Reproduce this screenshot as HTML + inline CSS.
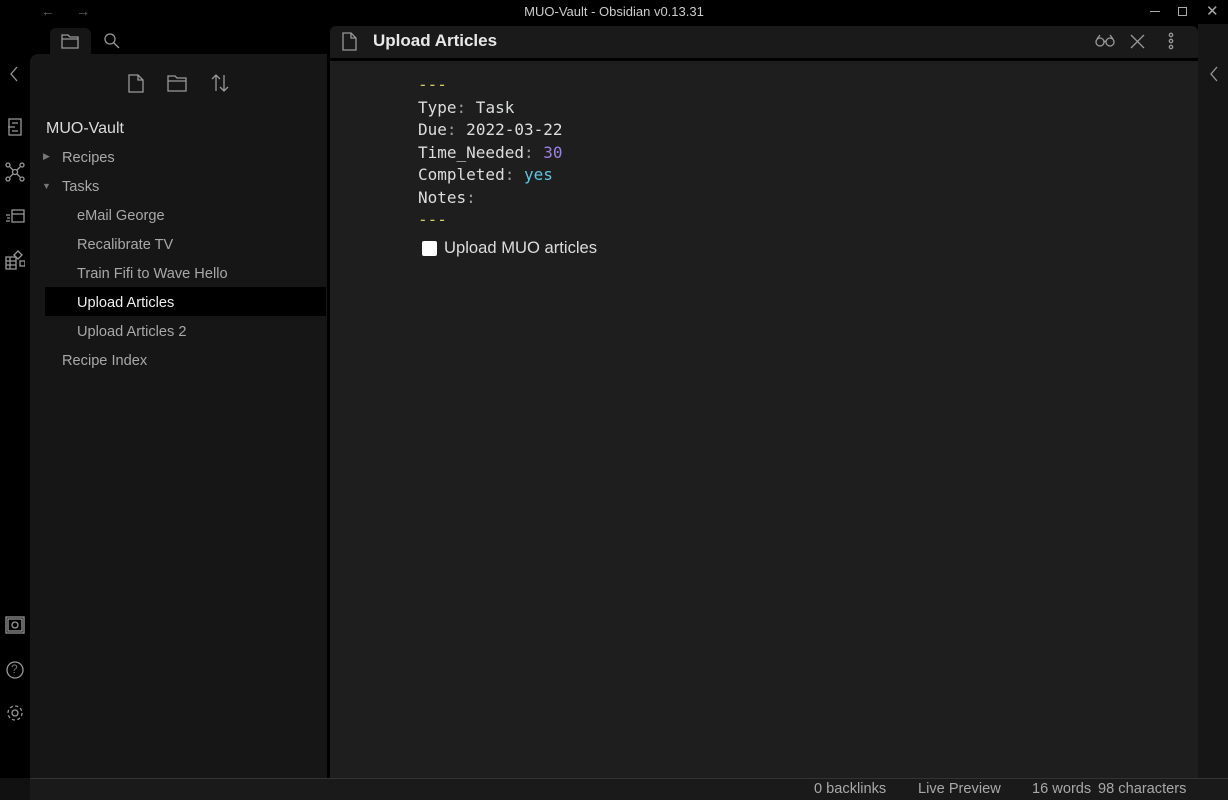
<!DOCTYPE html>
<html><head><meta charset="utf-8"><style>
*{margin:0;padding:0;box-sizing:border-box}
body{width:1228px;height:800px;background:#000;font-family:"Liberation Sans",sans-serif;position:relative;overflow:hidden;color:#ddd}
.abs{position:absolute}
.mono{font-family:"DejaVu Sans Mono","Liberation Mono",monospace;font-size:16px;color:#dcddde}
svg{position:absolute;fill:none;stroke:#999;stroke-width:1.3}
.tree div{position:absolute;font-size:14.6px;color:#a8a8a8}
.st{position:absolute;top:781px;font-size:14.6px;color:#a8a8a8}
</style></head><body>
<div class="abs" style="left:0;top:0;width:1228px;height:24px;background:#000;text-align:center;font-size:13px;line-height:24px;color:#ccc">MUO-Vault - Obsidian v0.13.31</div>
<div class="abs" style="left:41px;top:3px;color:#666;font-size:14px">←</div>
<div class="abs" style="left:76px;top:3px;color:#666;font-size:14px">→</div>
<div class="abs" style="left:1150px;top:11px;width:10px;height:1px;background:#aaa"></div>
<div class="abs" style="left:1178px;top:7px;width:9px;height:9px;border:1px solid #aaa"></div>
<div class="abs" style="left:1206px;top:2px;color:#aaa;font-size:15px">✕</div>
<div class="abs" style="left:50px;top:28px;width:41px;height:30px;background:#161616;border-radius:6px 6px 0 0"></div>
<svg style="left:61px;top:33px" width="18" height="16"><path d="M1 2h6l2 2h8v11H1z M1 6h16"/></svg>
<svg style="left:103px;top:32px" width="18" height="18"><circle cx="7" cy="7" r="5"/><path d="M11 11l5 5"/></svg>
<div class="abs" style="left:30px;top:54px;width:297px;height:724px;background:#161616;border-radius:8px 0 0 0"></div>
<svg style="left:128px;top:74px" width="16" height="19"><path d="M1 1h9l5 5v12H1z M10 1v5h5"/></svg>
<svg style="left:167px;top:74px" width="22" height="19"><path d="M1 2h7l2 2h9v13H1z M1 7h18"/></svg>
<svg style="left:210px;top:73px" width="20" height="20"><path d="M6 18V2M2 6l4-4 4 4M14 2v16M10 14l4 4 4-4"/></svg>
<div class="abs" style="left:46px;top:120px;font-size:16px;color:#dcdcdc">MUO-Vault</div>
<div class="tree">
<div style="left:43px;top:151px;font-size:9px;color:#777">▶</div>
<div style="left:62px;top:150px">Recipes</div>
<div style="left:42px;top:181px;font-size:9px;color:#777">▼</div>
<div style="left:62px;top:179px">Tasks</div>
<div style="left:77px;top:208px">eMail George</div>
<div style="left:77px;top:237px">Recalibrate TV</div>
<div style="left:77px;top:266px">Train Fifi to Wave Hello</div>
</div>
<div class="abs" style="left:45px;top:287px;width:281px;height:29px;background:#000"></div>
<div class="tree">
<div style="left:77px;top:295px;color:#eee">Upload Articles</div>
<div style="left:77px;top:324px">Upload Articles 2</div>
<div style="left:62px;top:353px">Recipe Index</div>
</div>
<svg style="left:8px;top:66px" width="12" height="16" stroke="#555"><path d="M9 1L3 8l6 7"/></svg>
<svg style="left:7px;top:118px" width="16" height="18" stroke="#777"><path d="M2 1h12v16H2z M5 5h6M1 9h7M5 13h6"/></svg>
<svg style="left:5px;top:162px" width="20" height="20" stroke="#777"><circle cx="10" cy="10" r="2.5"/><circle cx="3" cy="3" r="2"/><circle cx="17" cy="3" r="2"/><circle cx="3" cy="17" r="2"/><circle cx="17" cy="17" r="2"/><path d="M5 5l3 3M15 5l-3 3M5 15l3-3M15 15l-3-3"/></svg>
<svg style="left:5px;top:206px" width="20" height="18" stroke="#777"><path d="M7 4h12v12H7z M7 8h12M1 9h4M2 12h3M1 15h4"/></svg>
<svg style="left:5px;top:248px" width="20" height="22" stroke="#777"><path d="M1 9h10v12H1z M1 13h10M1 17h10M5 9v12M13 3l4 4-4 4-4-4z M15 13h5v5h-5z"/></svg>
<svg style="left:5px;top:616px" width="20" height="18" stroke="#777"><path d="M1 1h18v16H1z M3 3h14v12H3z"/><circle cx="10" cy="9" r="3"/></svg>
<svg style="left:5px;top:660px" width="20" height="20" stroke="#777"><circle cx="10" cy="10" r="8"/></svg>
<div class="abs" style="left:11px;top:662px;font-size:12px;color:#777">?</div>
<svg style="left:5px;top:703px" width="20" height="20" stroke="#777"><circle cx="10" cy="10" r="3"/><circle cx="10" cy="10" r="7" stroke-dasharray="3 2.5"/></svg>
<div class="abs" style="left:330px;top:26px;width:868px;height:34px;background:#1a1a1a;border-radius:6px 6px 0 0;border-bottom:2px solid #000"></div>
<svg style="left:342px;top:32px" width="15" height="19"><path d="M1 1h8l5 5v12H1z M9 1v5h5"/></svg>
<div class="abs" style="left:373px;top:31px;font-size:17px;font-weight:bold;color:#e8e8e8">Upload Articles</div>
<svg style="left:1095px;top:34px" width="20" height="14"><path d="M1 8a4 4 0 108 0a4 4 0 10-8 0M11 8a4 4 0 108 0a4 4 0 10-8 0M9 8q1-1 2 0M2 5l3-4M18 5l-3-4"/></svg>
<svg style="left:1130px;top:34px" width="15" height="15"><path d="M1 1l13 13M14 1L1 14"/></svg>
<svg style="left:1167px;top:32px" width="8" height="18"><circle cx="4" cy="3" r="1.7"/><circle cx="4" cy="9" r="1.7"/><circle cx="4" cy="15" r="1.7"/></svg>
<div class="abs" style="left:330px;top:61px;width:868px;height:717px;background:#1e1e1e"></div>
<div class="abs" style="left:1198px;top:24px;width:30px;height:754px;background:#161616"></div>
<svg style="left:1208px;top:66px" width="12" height="16" stroke="#555"><path d="M9 1L3 8l6 7"/></svg>
<div class="abs mono" style="left:418px;top:74px;line-height:22.5px;white-space:pre"><span style="color:#d7c86a">---</span>
Type<span style="color:#999">:</span> Task
Due<span style="color:#999">:</span> 2022-03-22
Time_Needed<span style="color:#999">:</span> <span style="color:#9b80e6">30</span>
Completed<span style="color:#999">:</span> <span style="color:#5fc5e0">yes</span>
Notes<span style="color:#999">:</span>
<span style="color:#d7c86a">---</span></div>
<div class="abs" style="left:422px;top:241px;width:15px;height:15px;background:#fff;border-radius:2px"></div>
<div class="abs" style="left:444px;top:238px;font-size:16.6px;color:#dcdcdc">Upload MUO articles</div>
<div class="abs" style="left:0;top:778px;width:1228px;height:22px;background:#1a1a1a;border-top:1px solid #333"></div>
<div class="abs" style="left:0;top:778px;width:30px;height:22px;background:#111"></div>
<div class="st" style="left:814px">0 backlinks</div>
<div class="st" style="left:918px">Live Preview</div>
<div class="st" style="left:1032px">16 words</div>
<div class="st" style="left:1098px">98 characters</div>
</body></html>
